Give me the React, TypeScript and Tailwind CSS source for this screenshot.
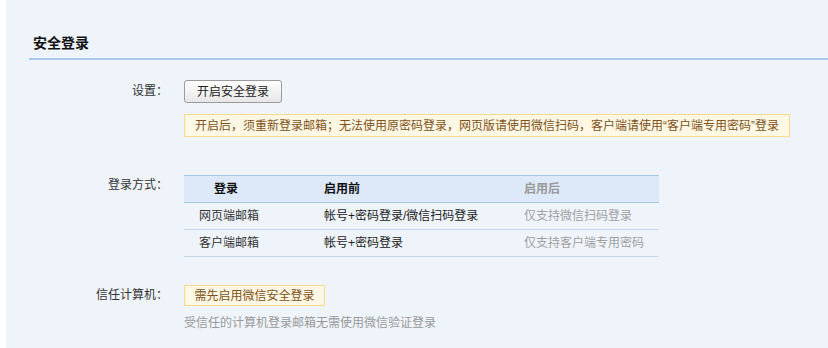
import React from 'react';

const rows = [
  { name: '网页端邮箱', before: '帐号+密码登录/微信扫码登录', after: '仅支持微信扫码登录' },
  { name: '客户端邮箱', before: '帐号+密码登录', after: '仅支持客户端专用密码' },
];

function FormRow({ label, children, labelClass = '' }: { label: string; children: React.ReactNode; labelClass?: string }) {
  return (
    <div className="flex">
      <div className={`w-[139px] shrink-0 text-right text-[12px] text-[#333] ${labelClass}`}>{label}</div>
      <div className="ml-[16px] flex flex-col">{children}</div>
    </div>
  );
}

export default function App() {
  return (
    <div
      className="flex h-[348px] w-[828px] bg-white"
      style={{ fontFamily: '"Liberation Sans", "Noto Sans CJK SC", sans-serif' }}
    >
      <div className="ml-[6px] flex-1 bg-[#eff4fb] pl-[23px]">
        {/* Header */}
        <div className="border-b-2 border-[#aac8ea] pl-[4px] pt-[34px] pb-[6px]">
          <h2 className="text-[14px] font-bold leading-[18px] text-[#111]">安全登录</h2>
        </div>

        <div className="mt-[20px] flex flex-col">
          {/* 设置 */}
          <FormRow label="设置：" labelClass="leading-[23px]">
            <button
              type="button"
              className="h-[23px] w-[98px] rounded-[3px] border border-[#9a9a9a] bg-gradient-to-b from-white to-[#e6e6e6] text-[12px] text-[#222]"
            >
              开启安全登录
            </button>
            <div className="mt-[11px] flex h-[23px] w-[606px] items-center border border-[#f6d98c] bg-[#fff8e4] pl-[10px] text-[12px] text-[#80521a]">
              开启后，须重新登录邮箱；无法使用原密码登录，网页版请使用微信扫码，客户端请使用“客户端专用密码”登录
            </div>
          </FormRow>

          {/* 登录方式 */}
          <div className="mt-[38px]">
            <FormRow label="登录方式：" labelClass="leading-[20px]">
              <table className="w-[475px] border-collapse text-[12px]">
                <thead>
                  <tr className="h-[27px] border-t border-b border-[#a8c6ea] bg-[#dde9f8]">
                    <th className="w-[125px] pl-[30px] text-left font-bold text-[#111]">登录</th>
                    <th className="w-[200px] pl-[15px] text-left font-bold text-[#111]">启用前</th>
                    <th className="pl-[15px] text-left font-bold text-[#999]">启用后</th>
                  </tr>
                </thead>
                <tbody>
                  {rows.map((r) => (
                    <tr key={r.name} className="h-[27px] border-b border-[#c8d7ea]">
                      <td className="pl-[15px] text-[#333]">{r.name}</td>
                      <td className="pl-[15px] text-[#222]">{r.before}</td>
                      <td className="pl-[15px] text-[#a0a0a0]">{r.after}</td>
                    </tr>
                  ))}
                </tbody>
              </table>
            </FormRow>
          </div>

          {/* 信任计算机 */}
          <div className="mt-[28px]">
            <FormRow label="信任计算机：" labelClass="leading-[21px]">
              <div className="flex h-[21px] w-[141px] items-center justify-center border border-[#f6d98c] bg-[#fff8e4] text-[12px] text-[#80521a]">
                需先启用微信安全登录
              </div>
              <p className="mt-[9px] text-[12px] leading-[16px] text-[#999]">受信任的计算机登录邮箱无需使用微信验证登录</p>
            </FormRow>
          </div>
        </div>
      </div>
    </div>
  );
}
